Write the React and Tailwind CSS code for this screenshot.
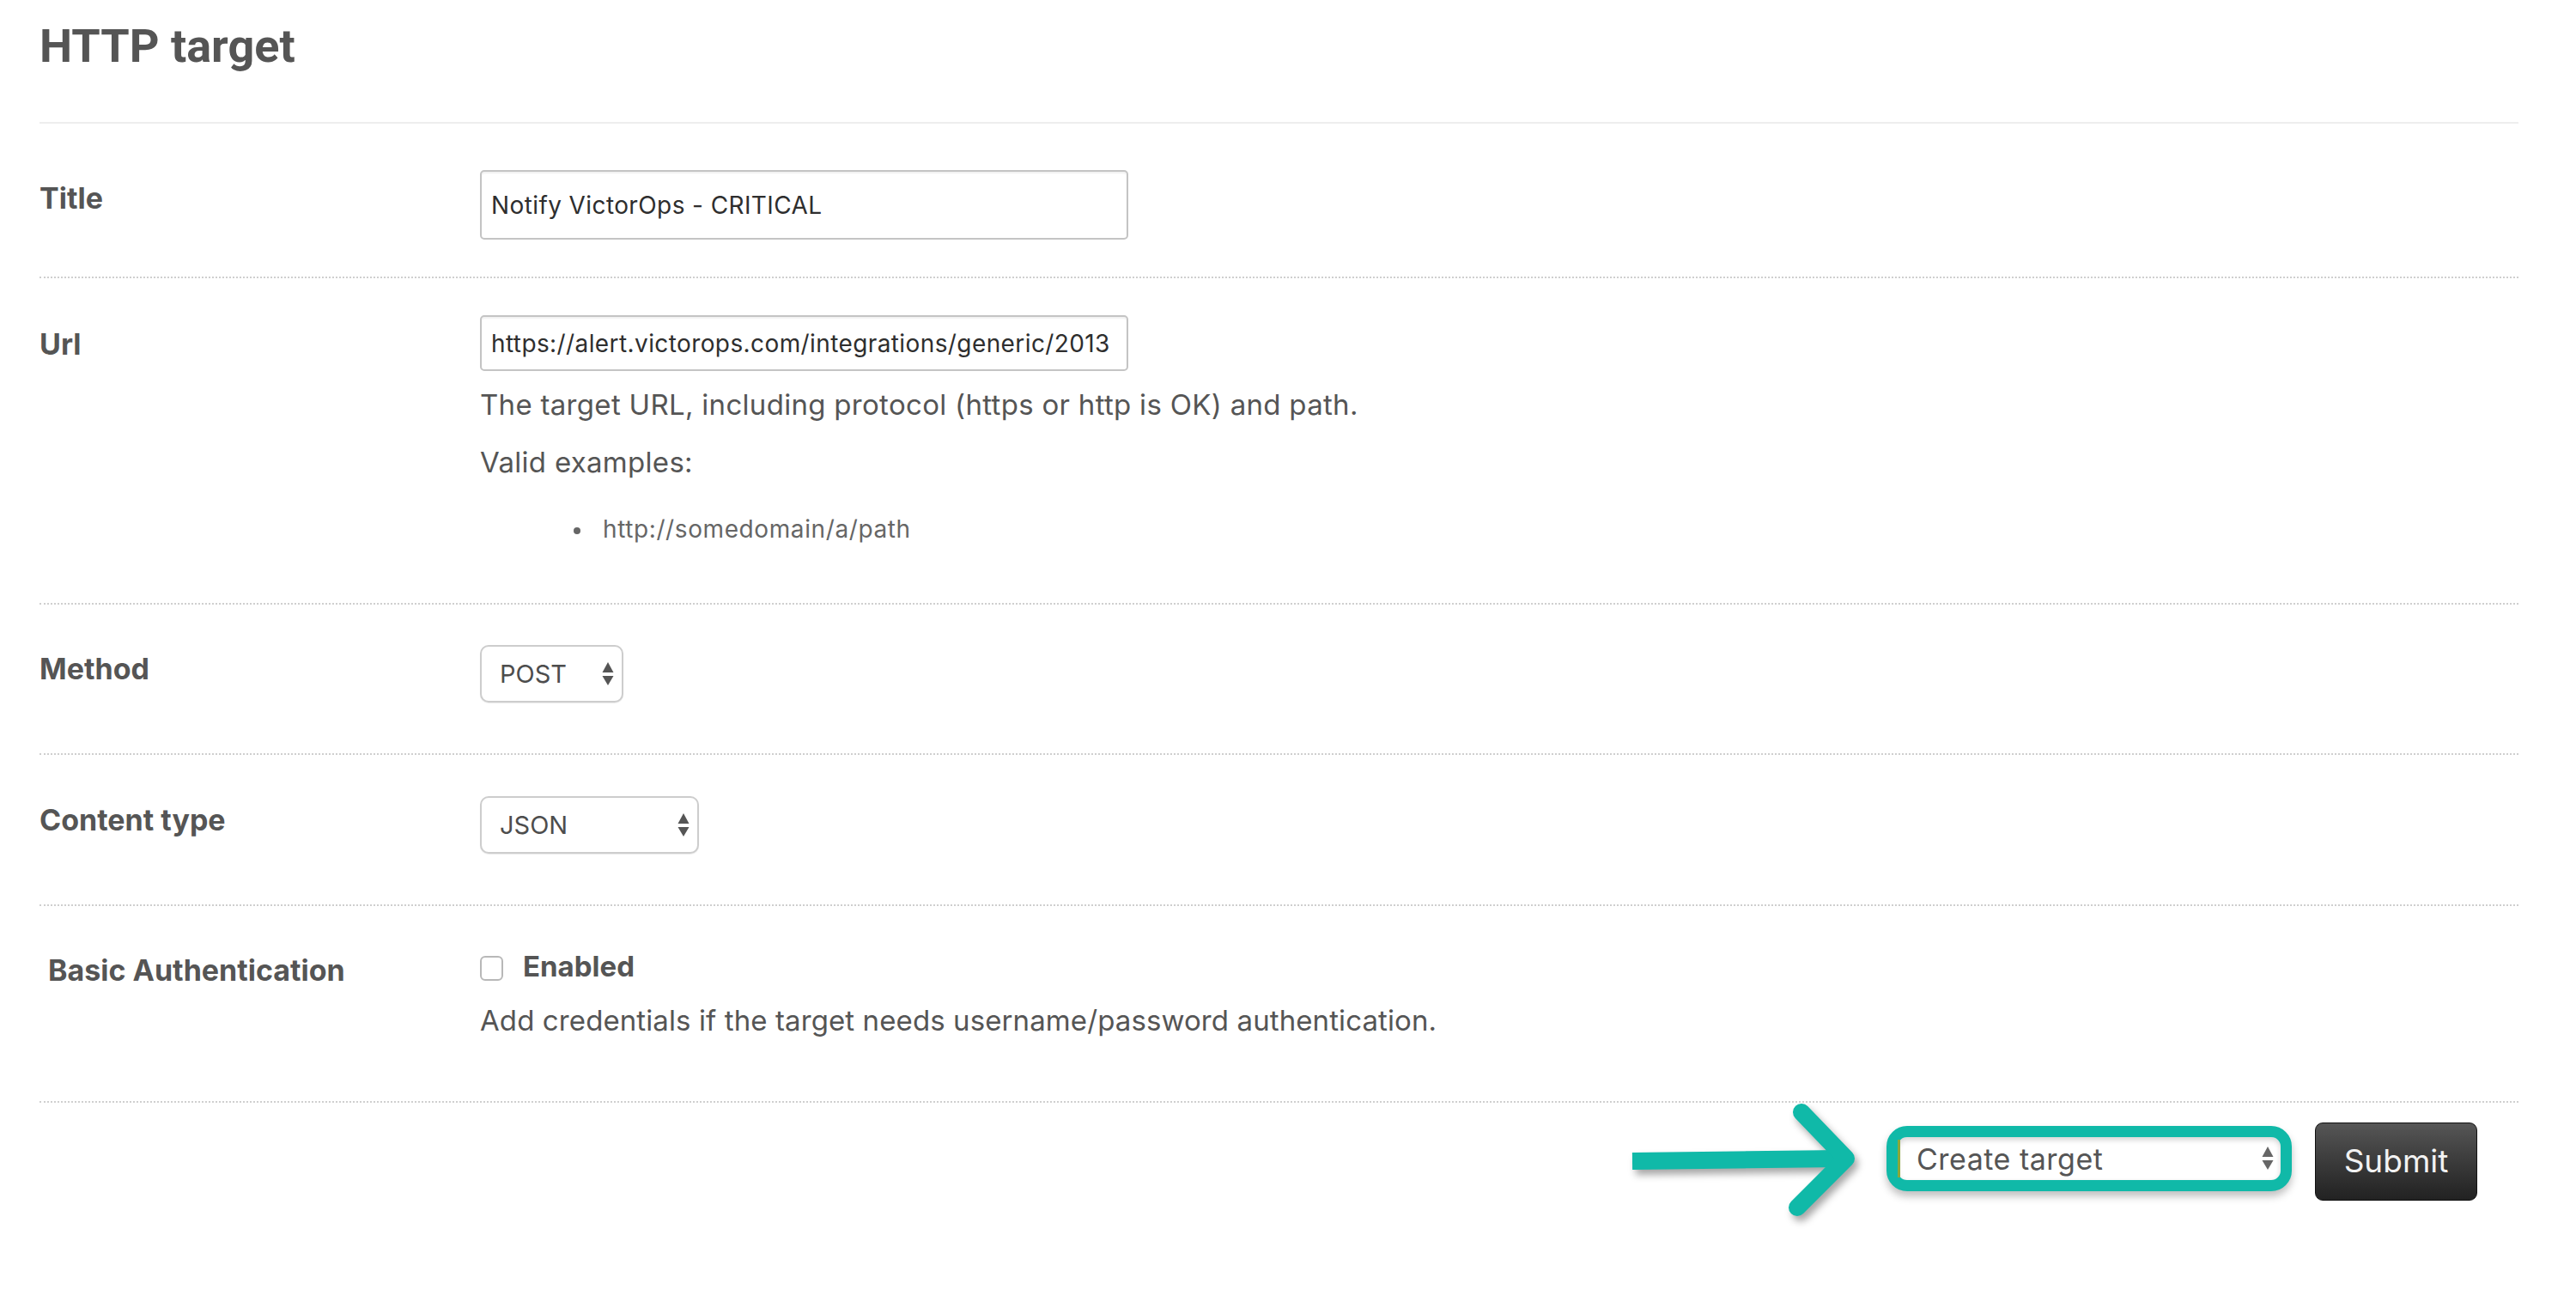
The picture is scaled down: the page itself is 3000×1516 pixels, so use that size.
import React from 'react';

const Row = ({ className = '', children }) => (
  <div className={`flex border-t-2 border-dotted border-[#cfcfcf] ${className}`}>{children}</div>
);

const Label = ({ className = 'w-[513px]', children }) => (
  <div className={`shrink-0 text-[34px] leading-[42px] font-bold text-[#555] ${className}`}>{children}</div>
);

const SelectArrows = ({ className = '' }) => (
  <svg className={className} width="14" height="28" viewBox="0 0 14 28">
    <path d="M7 0 L13.5 12 L0.5 12 Z" fill="currentColor" />
    <path d="M7 27 L13.5 16 L0.5 16 Z" fill="currentColor" />
  </svg>
);

const Select = ({ value, width }) => (
  <div
    className={`flex h-[67px] items-center justify-between rounded-[10px] border-2 border-[#cdcdcd] bg-white pl-[21px] pr-[9px] text-[29px] text-[#4d4d4d] shadow-[0_1px_1px_rgba(0,0,0,0.08)] ${width}`}
  >
    <span>{value}</span>
    <SelectArrows className="text-[#555]" />
  </div>
);

export default function App() {
  return (
    <div className="min-h-screen w-full bg-white pl-[46px] pr-[67px] font-['Inter','Noto_Sans',sans-serif] text-[#555]">
      <div className="h-[144px] border-b-2 border-[#eeeeee] pt-[19px]">
        <h1 className="font-['Roboto',sans-serif] text-[54px] leading-[70px] font-bold text-[#555]">HTTP target</h1>
      </div>

      {/* Title */}
      <div className="flex h-[178px] pt-[54px]">
        <Label className="mt-[12px] w-[513px]">Title</Label>
        <div className="flex h-[81px] w-[755px] items-center rounded-[5px] border-2 border-[#c4c4c4] pl-[11px] text-[28px] tracking-[0.4px] text-[#2e2e2e] shadow-[inset_0_2px_2px_rgba(0,0,0,0.06)]">
          Notify VictorOps - CRITICAL
        </div>
      </div>

      {/* Url */}
      <Row className="h-[380px] pt-[43px]">
        <Label className="mt-[13px] w-[513px]">Url</Label>
        <div className="flex flex-col">
          <div className="flex h-[65px] w-[755px] items-center overflow-hidden whitespace-nowrap rounded-[5px] border-2 border-[#c4c4c4] pl-[11px] text-[28px] tracking-[0.4px] text-[#2e2e2e] shadow-[inset_0_2px_2px_rgba(0,0,0,0.06)]">
            https://alert.victorops.com/integrations/generic/2013
          </div>
          <p className="mt-[15px] text-[33px] leading-[48px] tracking-[0.3px]">
            The target URL, including protocol (https or http is OK) and path.
          </p>
          <p className="mt-[19px] text-[33px] leading-[48px] tracking-[0.3px]">Valid examples:</p>
          <div className="mt-[36px] flex items-center text-[28px] leading-[36px] tracking-[0.6px] text-[#666]">
            <span className="ml-[109px] mt-[4px] h-[8px] w-[8px] rounded-full bg-[#666]" />
            <span className="ml-[26px]">http://somedomain/a/path</span>
          </div>
        </div>
      </Row>

      {/* Method */}
      <Row className="h-[175px] pt-[47px]">
        <Label className="mt-[7px] w-[513px]">Method</Label>
        <Select value="POST" width="w-[167px]" />
      </Row>

      {/* Content type */}
      <Row className="h-[176px] pt-[48px]">
        <Label className="mt-[7px] w-[513px]">Content type</Label>
        <Select value="JSON" width="w-[255px]" />
      </Row>

      {/* Basic Authentication */}
      <Row className="h-[229px] pt-[49px]">
        <Label className="ml-[10px] mt-[5px] w-[503px]">Basic Authentication</Label>
        <div className="flex flex-col">
          <div className="flex items-start">
            <span className="mt-[9px] h-[29px] w-[27px] rounded-[6px] border-2 border-[#b8b8b8] bg-white" />
            <span className="ml-[23px] text-[33px] leading-[42px] font-bold">Enabled</span>
          </div>
          <p className="mt-[18px] text-[33px] leading-[48px] tracking-[0.1px]">
            Add credentials if the target needs username/password authentication.
          </p>
        </div>
      </Row>

      {/* Actions */}
      <Row className="h-[138px] items-center justify-end pr-[48px]">
        <svg
          className="mr-[19px] drop-shadow-[4px_6px_4px_rgba(0,0,0,0.35)]"
          width="290"
          height="150"
          viewBox="0 0 290 150"
          fill="none"
        >
          <path d="M13 75 L255 72" stroke="#10b9a8" strokeWidth="20" />
          <path d="M210 18 L262 72 L205 129" stroke="#10b9a8" strokeWidth="20" strokeLinecap="round" strokeLinejoin="round" />
        </svg>

        <div className="mb-[6px] flex h-[76px] w-[472px] items-stretch rounded-[24px] border-[13px] border-[#10b9a8] bg-white shadow-[0_6px_10px_rgba(0,0,0,0.25),inset_0_3px_6px_rgba(0,0,0,0.18)]">
          <div className="my-[3px] w-[3px] bg-[#8ca83a]" />
          <div className="flex flex-1 items-center justify-between pl-[19px] pr-[8px]">
            <span className="text-[34px] tracking-[0.5px] text-[#555]">Create target</span>
            <SelectArrows className="text-[#666]" />
          </div>
        </div>

        <button className="ml-[27px] h-[91px] w-[189px] rounded-[9px] border border-[#111] bg-gradient-to-b from-[#565656] to-[#222] text-[37px] text-[#f2f2f2]">
          Submit
        </button>
      </Row>
    </div>
  );
}
